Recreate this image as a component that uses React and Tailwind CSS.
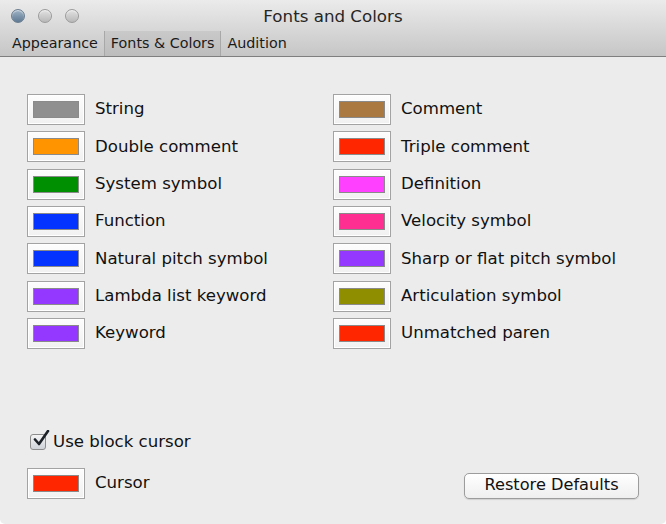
import React, { useState } from 'react';

const leftColors = [
  { label: 'String', color: '#8f8f8f' },
  { label: 'Double comment', color: '#ff9300' },
  { label: 'System symbol', color: '#008f00' },
  { label: 'Function', color: '#0433ff' },
  { label: 'Natural pitch symbol', color: '#0433ff' },
  { label: 'Lambda list keyword', color: '#9437ff' },
  { label: 'Keyword', color: '#9437ff' },
];

const rightColors = [
  { label: 'Comment', color: '#aa7942' },
  { label: 'Triple comment', color: '#ff2600' },
  { label: 'Definition', color: '#ff40ff' },
  { label: 'Velocity symbol', color: '#ff2f92' },
  { label: 'Sharp or flat pitch symbol', color: '#9437ff' },
  { label: 'Articulation symbol', color: '#8e8e00' },
  { label: 'Unmatched paren', color: '#ff2600' },
];

const ColorWell = ({ color }) => (
  <div className="w-[58px] h-[31px] shrink-0 border border-[#a3a3a3] bg-gradient-to-b from-[#fdfdfd] to-[#f1f1f1] flex items-center justify-center shadow-[inset_0_0_0_1px_#ffffff]">
    {/* swatch colour comes from data */}
    <div className="w-[46px] h-[17px] border border-[#8a8a8a]" style={{ backgroundColor: color }} />
  </div>
);

const ColorRow = ({ label, color }) => (
  <div className="flex items-center gap-[10px] h-[31px]">
    <ColorWell color={color} />
    <span className="text-[16.6px] text-[#111] leading-none">{label}</span>
  </div>
);

const TrafficLight = ({ active }) => (
  <div
    className={`w-[14px] h-[14px] rounded-full border ${
      active
        ? 'border-[#6a7d90] bg-gradient-to-b from-[#9fb3c6] to-[#5f7a93]'
        : 'border-[#9a9a9a] bg-gradient-to-b from-[#e2e2e2] to-[#b8b8b8]'
    } shadow-[inset_0_1px_1px_rgba(255,255,255,0.6)]`}
  />
);

export default function App() {
  const [activeTab, setActiveTab] = useState('fonts');
  const [blockCursor, setBlockCursor] = useState(true);

  const tabs = [
    { id: 'appearance', label: 'Appearance' },
    { id: 'fonts', label: 'Fonts & Colors' },
    { id: 'audition', label: 'Audition' },
  ];

  return (
    <div
      className="w-[666px] h-[524px] bg-[#ececec] flex flex-col overflow-hidden rounded-b-[5px]"
      style={{ fontFamily: '"DejaVu Sans", "Liberation Sans", sans-serif' }}
    >
      {/* Title bar + toolbar */}
      <div className="h-[57px] bg-gradient-to-b from-[#ebebeb] to-[#c6c6c6] border-b border-[#7f7f7f] flex flex-col">
        <div className="h-[31px] relative flex items-center pl-[11px] gap-[13px]">
          <TrafficLight active />
          <TrafficLight />
          <TrafficLight />
          <div className="absolute inset-0 flex items-center justify-center pt-[2px] text-[16.7px] text-[#262626] pointer-events-none">
            Fonts and Colors
          </div>
        </div>
        <nav className="flex-1 flex items-stretch pl-[6px]">
          {tabs.map((tab, i) => (
            <button
              key={tab.id}
              onClick={() => setActiveTab(tab.id)}
              className={`px-[6px] text-[14.3px] text-[#1a1a1a] flex items-center ${
                i > 0 ? 'border-l border-[#a8a8a8]' : ''
              } ${activeTab === tab.id ? 'bg-gradient-to-b from-[#c9c9c9] to-[#bdbdbd]' : ''}`}
            >
              {tab.label}
            </button>
          ))}
        </nav>
      </div>

      {/* Content */}
      <div className="flex-1 flex flex-col pl-[27px] pr-[27px] pt-[37px] pb-[25px]">
        <div className="grid grid-cols-[306px_1fr] ">
          <div className="flex flex-col gap-[6.33px]">
            {leftColors.map(c => (
              <ColorRow key={c.label} {...c} />
            ))}
          </div>
          <div className="flex flex-col gap-[6.33px]">
            {rightColors.map(c => (
              <ColorRow key={c.label} {...c} />
            ))}
          </div>
        </div>

        <div className="mt-auto flex flex-col">
          <label className="flex items-center gap-[7px] pl-[3px] h-[20px] mb-[16px] cursor-default">
            <span
              onClick={() => setBlockCursor(!blockCursor)}
              className="relative w-[16px] h-[16px] rounded-[3px] border border-[#8c8c8c] bg-gradient-to-b from-[#f4f4f4] to-[#cfd3d8]"
            >
              {blockCursor && (
                <svg viewBox="0 0 18 18" className="absolute left-[1px] -top-[5px] w-[18px] h-[18px]">
                  <path d="M3 9.5 L7 14 L16 1" fill="none" stroke="#1c2127" strokeWidth="2.6" strokeLinecap="round" strokeLinejoin="round" />
                </svg>
              )}
            </span>
            <span className="text-[16.6px] text-[#111] leading-none">Use block cursor</span>
          </label>

          <div className="flex items-center justify-between">
            <ColorRow label="Cursor" color="#ff2600" />
            <button className="w-[175px] h-[26px] rounded-[5px] border border-[#9c9c9c] bg-gradient-to-b from-[#ffffff] to-[#efefef] shadow-[0_1px_1px_rgba(0,0,0,0.12)] text-[16.2px] text-[#111] leading-none mt-[4px]">
              Restore Defaults
            </button>
          </div>
        </div>
      </div>
    </div>
  );
}
